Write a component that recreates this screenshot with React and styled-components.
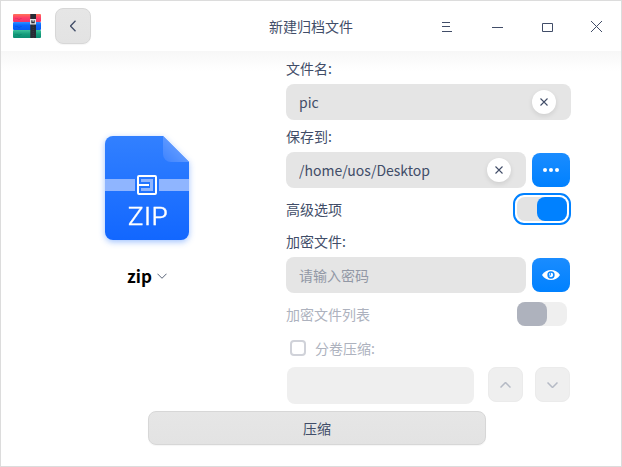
import React from "react";
import styled, { createGlobalStyle, css } from "styled-components";

const Global = createGlobalStyle`
  *, *::before, *::after { box-sizing: border-box; }
  body { margin: 0; background: #fff; }
  button, input { font: inherit; color: inherit; }
`;

const Window = styled.div`
  width: 622px;
  height: 467px;
  border: 1px solid #dcdcdc;
  background: #fff;
  color: #414d68;
  font: 14px/20px "Noto Sans CJK SC", "Noto Sans", sans-serif;
  display: flex;
  flex-direction: column;
  overflow: hidden;
`;

const TitleBar = styled.header`
  height: 50px;
  flex: none;
  display: grid;
  grid-template-columns: 1fr 84px 1fr;
  align-items: center;
`;

const TitleStart = styled.div`
  display: flex;
  align-items: center;
  gap: 14px;
  padding-left: 12px;
`;

const Title = styled.h1`
  margin: 0;
  font-size: 14px;
  font-weight: 400;
  white-space: nowrap;
`;

const WindowControls = styled.div`
  display: flex;
  justify-content: flex-end;
`;

const ControlButton = styled.button`
  width: 50px;
  height: 50px;
  padding: 0;
  border: 0;
  background: none;
  display: grid;
  place-items: center;
`;

const PlainButton = styled.button`
  padding: 0;
  border: 1px solid #d7d7d7;
  border-radius: 8px;
  background: linear-gradient(#e6e6e6, #e3e3e3);
  box-shadow: 0 1px 1px rgba(0, 0, 0, 0.04);
  display: grid;
  place-items: center;
  width: ${(p) => p.$width}px;
  height: ${(p) => p.$height}px;
  ${(p) =>
    p.disabled &&
    css`
      color: #b5bac5;
      border-color: #ebebeb;
      background: #efefef;
      box-shadow: none;
    `}
`;

const Body = styled.main`
  flex: 1;
  display: grid;
  grid-template-columns: 285px 285px;
  grid-template-rows: 359px 1fr;
  background: linear-gradient(#f7f7f7, #fff 20px);
`;

const FormatPanel = styled.section`
  display: flex;
  flex-direction: column;
  align-items: center;
  padding: 85px 0 0 7px;
`;

const FormatPicker = styled.button`
  margin-top: 22px;
  height: 28px;
  padding: 0;
  border: 0;
  background: none;
  display: flex;
  align-items: center;
  gap: 5px;
`;

const FormatName = styled.span`
  color: #000;
  font-size: 17px;
  font-weight: 700;
  line-height: 28px;
`;

const Form = styled.form`
  display: flex;
  flex-direction: column;
  padding-top: 3px;
`;

const Row = styled.div`
  display: flex;
  align-items: center;
  flex: none;
  height: ${(p) => p.$height}px;
  gap: ${(p) => p.$gap || 0}px;
  justify-content: ${(p) => (p.$spread ? "space-between" : "flex-start")};
  padding: ${(p) => p.$pad || 0};
`;

const Label = styled.label`
  color: ${(p) => (p.$muted ? "#adb2be" : "inherit")};
  white-space: nowrap;
`;

const Field = styled.div`
  width: ${(p) => p.$width}px;
  height: ${(p) => p.$height || 36}px;
  border-radius: 8px;
  background: ${(p) => (p.$muted ? "#efefef" : "#e5e5e5")};
  display: flex;
  align-items: center;
  padding: 0 15px 0 13px;
`;

const Input = styled.input`
  flex: 1;
  min-width: 0;
  height: 24px;
  padding: 0;
  border: 0;
  outline: 0;
  background: none;
  &::placeholder { color: #9298a5; opacity: 1; }
`;

const ClearButton = styled.button`
  width: 24px;
  height: 24px;
  padding: 0;
  border: 0;
  border-radius: 50%;
  background: #fff;
  box-shadow: 0 2px 5px rgba(0, 0, 0, 0.1);
  display: grid;
  place-items: center;
`;

const AccentButton = styled.button`
  width: 38px;
  height: 34px;
  padding: 0;
  border: 0;
  border-radius: 8px;
  background: linear-gradient(#1a8cff, #0081ff);
  display: grid;
  place-items: center;
`;

const FocusRing = styled.div`
  padding: 2px;
  border: 2px solid ${(p) => (p.$focused ? "#0081ff" : "transparent")};
  border-radius: 11px;
`;

const Track = styled.div`
  width: 50px;
  height: 24px;
  border-radius: 8px;
  background: ${(p) => (p.$muted ? "#efefef" : "#e3e3e3")};
  display: flex;
  justify-content: ${(p) => (p.$on ? "flex-end" : "flex-start")};
`;

const Thumb = styled.span`
  width: 30px;
  border-radius: 8px;
  background: ${(p) => (p.$muted ? "#aeb2bd" : "#0081ff")};
`;

const CheckBox = styled.span`
  width: 16px;
  height: 16px;
  border: 2px solid #d0d2d9;
  border-radius: 4px;
`;

const Footer = styled.footer`
  grid-column: 1 / -1;
  padding: 1px 0 0 147px;
`;

const Icon = styled.svg`
  display: block;
  fill: none;
  stroke: ${(p) => p.$color || "#414d68"};
  stroke-width: ${(p) => p.$weight || 1};
`;

function ArchiverLogo() {
  const bands = [
    ["url(#red)", 0, "#c52c58"],
    ["url(#blue)", 8, "#0747cb"],
    ["url(#green)", 16, "#087a65"],
  ];
  return (
    <svg width="28" height="24" viewBox="0 0 28 24">
      <defs>
        <linearGradient id="red" x2="0" y2="1"><stop stopColor="#ff7358" /><stop offset=".5" stopColor="#ff3c69" /><stop offset="1" stopColor="#ee3668" /></linearGradient>
        <linearGradient id="blue" x2="0" y2="1"><stop stopColor="#2e92ff" /><stop offset=".4" stopColor="#0867ff" /><stop offset="1" stopColor="#075bf0" /></linearGradient>
        <linearGradient id="green" x2="0" y2="1"><stop stopColor="#3fc29a" /><stop offset=".5" stopColor="#159d7c" /><stop offset="1" stopColor="#0b8c72" /></linearGradient>
      </defs>
      {bands.map(([fill, y, mark]) => (
        <g key={y}>
          <rect y={y} width="28" height="8" rx="1" fill={fill} />
          <path d={`M2 ${y + 4.5}h3v1h2v-1h2`} stroke={mark} fill="none" opacity=".35" />
        </g>
      ))}
      <rect x="17.3" width="5.7" height="24" fill="#272b34" />
      <path d="M20.2 11v13" stroke="#454b57" strokeDasharray="1 1" opacity=".5" />
      <rect x="17" y="5" width="6" height="5.5" fill="#e4e4e6" />
      <path d="M18.3 6.2v3h3.4v-3h-1v1.6h-1.2V6.2z" fill="#272b34" />
    </svg>
  );
}

const FileDrawing = styled.svg`
  display: block;
  overflow: visible;
  filter: drop-shadow(0 2px 3px rgba(20, 104, 255, 0.4));
`;

function ZipFile() {
  return (
    <FileDrawing width="84" height="104" viewBox="0 0 84 104">
      <defs>
        <linearGradient id="sheet" x2="0" y2="1"><stop stopColor="#3280ff" /><stop offset="1" stopColor="#1267ff" /></linearGradient>
        <linearGradient id="fold" x1="0" y1="1" x2=".6" y2=".4"><stop stopColor="#3d83ff" /><stop offset="1" stopColor="#629bff" /></linearGradient>
      </defs>
      <path d="M8 0H58L84 26V96a8 8 0 0 1-8 8H8a8 8 0 0 1-8-8V8a8 8 0 0 1 8-8Z" fill="url(#sheet)" />
      <path d="M58 0v18a8 8 0 0 0 8 8h18Z" fill="url(#fold)" />
      <path d="M0 43h30v12H0zM54 43h30v12H54z" fill="#8fb5ff" />
      <path d="M36 43h12v12H36v-3h9v-6h-9z" fill="#8fb5ff" />
      <rect x="33" y="40" width="18" height="18" rx="1" fill="none" stroke="#fff" strokeWidth="2" />
      <path d="M32 49h12" stroke="#fff" strokeWidth="2" />
      <text x="22.3" y="89" textLength="40.8" lengthAdjust="spacingAndGlyphs" fill="#fff" stroke="#fff" strokeWidth=".3" fontFamily="Inter, sans-serif" fontWeight="300" fontSize="23.5">ZIP</text>
    </FileDrawing>
  );
}

function Cross() {
  return (
    <Icon width="8" height="8" viewBox="0 0 8 8" $weight={1.1}>
      <path d="m.5.5 7 7m0-7-7 7" />
    </Icon>
  );
}

function ControlIcon({ d }) {
  return (
    <Icon width="14" height="14" viewBox="0 0 14 14">
      <path d={d} />
    </Icon>
  );
}

function Chevron({ up, color, weight, width = 11 }) {
  return (
    <Icon width={width} height="6" viewBox="0 0 11 6" $color={color} $weight={weight}>
      <path d={up ? "m.5 5.5 5-5 5 5" : "m.5.5 5 5 5-5"} />
    </Icon>
  );
}

function Clear() {
  return (
    <ClearButton type="button" aria-label="清除">
      <Cross />
    </ClearButton>
  );
}

function Toggle({ on, focused, muted }) {
  return (
    <FocusRing $focused={focused}>
      <Track $on={on} $muted={muted} role="switch" aria-checked={!!on}>
        <Thumb $muted={muted} />
      </Track>
    </FocusRing>
  );
}

export default function App() {
  return (
    <>
      <Global />
      <Window>
        <TitleBar>
          <TitleStart>
            <ArchiverLogo />
            <PlainButton $width={36} $height={36} aria-label="返回">
              <Icon width="6" height="12" viewBox="0 0 6 12" $weight={1.3}><path d="m5.5.8-5 5.2 5 5.2" /></Icon>
            </PlainButton>
          </TitleStart>
          <Title>新建归档文件</Title>
          <WindowControls>
            <ControlButton aria-label="菜单"><ControlIcon d="M3 3.5h8M3 7.5h8M3 12.5h10" /></ControlButton>
            <ControlButton aria-label="最小化"><ControlIcon d="M3 8.5h11" /></ControlButton>
            <ControlButton aria-label="最大化"><ControlIcon d="M3.5 4.5h10v8h-10z" /></ControlButton>
            <ControlButton aria-label="关闭"><ControlIcon d="m2 2 11 11m0-11L2 13" /></ControlButton>
          </WindowControls>
        </TitleBar>
        <Body>
          <FormatPanel>
            <ZipFile />
            <FormatPicker>
              <FormatName>zip</FormatName>
              <Chevron width={10} color="#5a6478" weight={1.1} />
            </FormatPicker>
          </FormatPanel>
          <Form>
            <Row $height={30} $pad="0 0 2px"><Label>文件名:</Label></Row>
            <Row $height={36}>
              <Field $width={285}><Input defaultValue="pic" /><Clear /></Field>
            </Row>
            <Row $height={32}><Label>保存到:</Label></Row>
            <Row $height={36} $gap={6}>
              <Field $width={240}><Input defaultValue="/home/uos/Desktop" /><Clear /></Field>
              <AccentButton type="button" aria-label="浏览">
                <svg width="16" height="4" fill="#fff"><circle cx="2" cy="2" r="2" /><circle cx="8" cy="2" r="2" /><circle cx="14" cy="2" r="2" /></svg>
              </AccentButton>
            </Row>
            <Row $height={42} $spread><Label>高级选项</Label><Toggle on focused /></Row>
            <Row $height={27} $pad="0 0 5px"><Label>加密文件:</Label></Row>
            <Row $height={36} $gap={6}>
              <Field $width={240}><Input placeholder="请输入密码" /></Field>
              <AccentButton type="button" aria-label="显示密码">
                <svg width="18" height="10" viewBox="0 0 18 10">
                  <path d="M0 5C4-1.6 14-1.6 18 5C14 11.6 4 11.6 0 5Z" fill="#fff" />
                  <circle cx="9" cy="5" r="2.9" fill="#fff" stroke="#0986ff" strokeWidth="1.5" />
                  <path d="M8.5 3v2.2h-2" stroke="#0986ff" strokeWidth=".8" fill="none" />
                </svg>
              </AccentButton>
            </Row>
            <Row $height={42} $spread><Label $muted>加密文件列表</Label><Toggle muted /></Row>
            <Row $height={32} $gap={9} $pad="0 0 6px 4px"><CheckBox /><Label $muted>分卷压缩:</Label></Row>
            <Row $height={37} $gap={14} $pad="0 0 0 1px">
              <Field $width={187} $height={37} $muted />
              <Row $height={37} $gap={12} $pad="0 0 2px">
                <PlainButton type="button" disabled $width={35} $height={35} aria-label="增加"><Chevron up color="#b5bac5" weight={1.5} /></PlainButton>
                <PlainButton type="button" disabled $width={35} $height={35} aria-label="减少"><Chevron color="#b5bac5" weight={1.5} /></PlainButton>
              </Row>
            </Row>
          </Form>
          <Footer>
            <PlainButton $width={338} $height={34}>压缩</PlainButton>
          </Footer>
        </Body>
      </Window>
    </>
  );
}
